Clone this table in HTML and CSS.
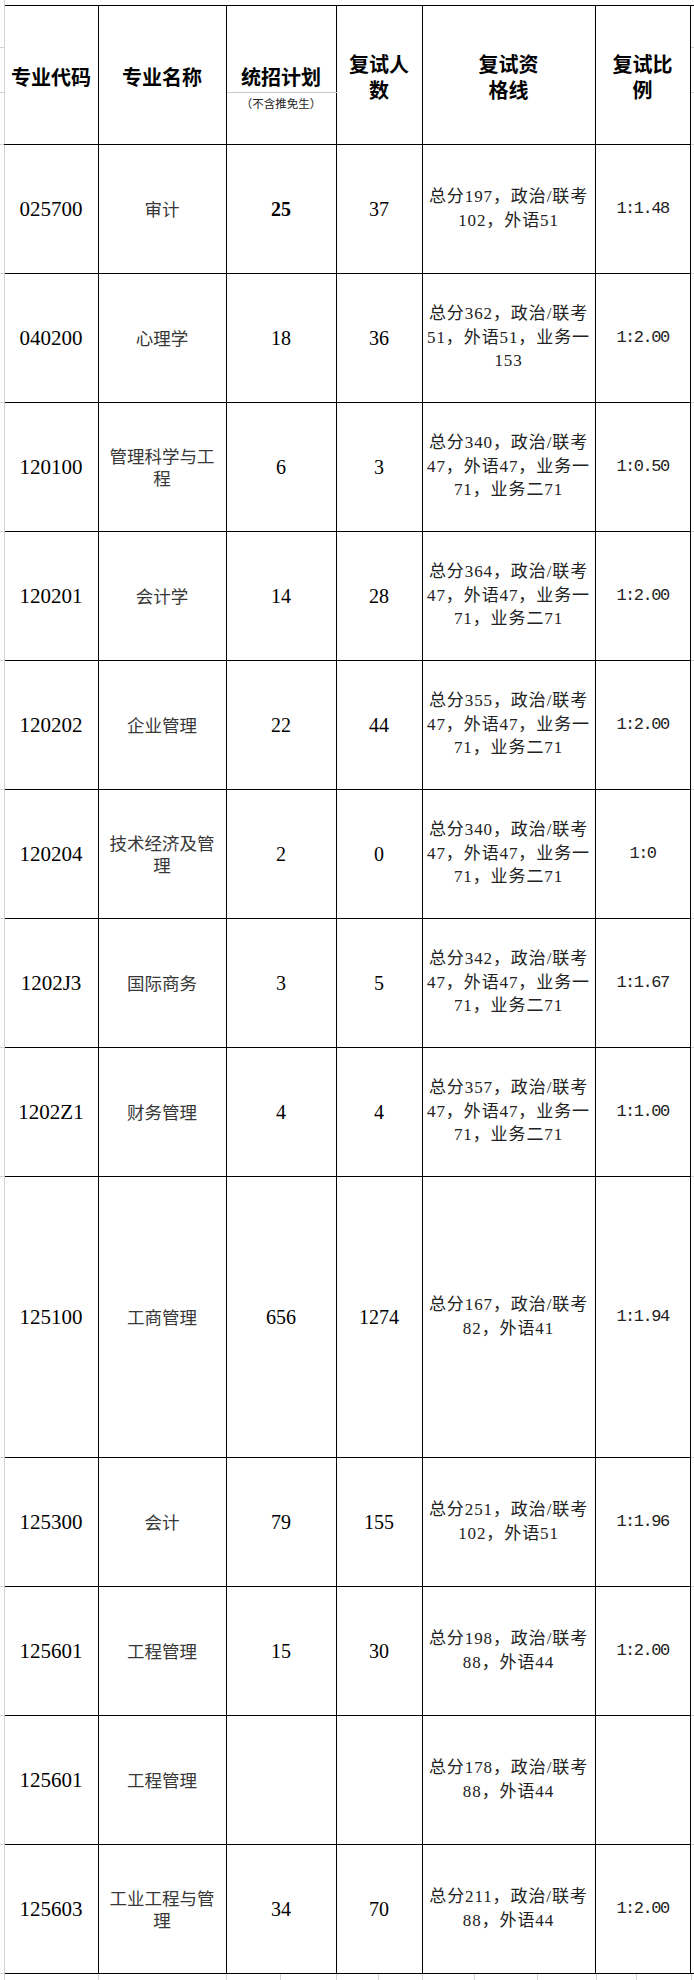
FILE: index.html
```html
<!DOCTYPE html>
<html lang="zh-CN">
<head>
<meta charset="utf-8">
<title>复试分数线</title>
<link rel="stylesheet" href="styles.css">
</head>
<body>
<table class="sheet">
  <colgroup>
    <col class="w-gl"><col class="w-code"><col class="w-name"><col class="w-plan"><col class="w-cnt"><col class="w-line"><col class="w-ratio"><col class="w-gr">
  </colgroup>
  <tr class="r-top"><td class="gl gl-top"></td><td class="blank" colspan="6"></td><td class="gr gr-top"></td></tr>
  <tr class="r-h1">
    <td class="gl"></td>
    <th class="first" rowspan="3">专业代码</th>
    <th rowspan="3">专业名称</th>
    <th class="plan" rowspan="2">统招计划</th>
    <th rowspan="3">复试人<br>数</th>
    <th rowspan="3">复试资<br>格线</th>
    <th rowspan="3">复试比<br>例</th>
    <td class="gr"></td>
  </tr>
  <tr class="r-h2"><td class="gl"></td><td class="gr"></td></tr>
  <tr class="r-h3"><td class="gl"></td><td class="plan-note"><span class="paren">（</span>不含推免生<span class="paren">）</span></td><td class="gr"></td></tr>

  <tr class="row"><td class="gl"></td><td class="cell code first">025700</td><td class="cell name">审计</td><td class="cell num strong">25</td><td class="cell num">37</td><td class="cell qual">总分197，政治/联考<br>102，外语51</td><td class="cell ratio">1:1.48</td><td class="gr"></td></tr>
  <tr class="row"><td class="gl"></td><td class="cell code first">040200</td><td class="cell name">心理学</td><td class="cell num">18</td><td class="cell num">36</td><td class="cell qual">总分362，政治/联考<br>51，外语51，业务一<br>153</td><td class="cell ratio">1:2.00</td><td class="gr"></td></tr>
  <tr class="row"><td class="gl"></td><td class="cell code first">120100</td><td class="cell name">管理科学与工<br>程</td><td class="cell num">6</td><td class="cell num">3</td><td class="cell qual">总分340，政治/联考<br>47，外语47，业务一<br>71，业务二71</td><td class="cell ratio">1:0.50</td><td class="gr"></td></tr>
  <tr class="row"><td class="gl"></td><td class="cell code first">120201</td><td class="cell name">会计学</td><td class="cell num">14</td><td class="cell num">28</td><td class="cell qual">总分364，政治/联考<br>47，外语47，业务一<br>71，业务二71</td><td class="cell ratio">1:2.00</td><td class="gr"></td></tr>
  <tr class="row"><td class="gl"></td><td class="cell code first">120202</td><td class="cell name">企业管理</td><td class="cell num">22</td><td class="cell num">44</td><td class="cell qual">总分355，政治/联考<br>47，外语47，业务一<br>71，业务二71</td><td class="cell ratio">1:2.00</td><td class="gr"></td></tr>
  <tr class="row"><td class="gl"></td><td class="cell code first">120204</td><td class="cell name">技术经济及管<br>理</td><td class="cell num">2</td><td class="cell num">0</td><td class="cell qual">总分340，政治/联考<br>47，外语47，业务一<br>71，业务二71</td><td class="cell ratio">1:0</td><td class="gr"></td></tr>
  <tr class="row"><td class="gl"></td><td class="cell code first">1202J3</td><td class="cell name">国际商务</td><td class="cell num">3</td><td class="cell num">5</td><td class="cell qual">总分342，政治/联考<br>47，外语47，业务一<br>71，业务二71</td><td class="cell ratio">1:1.67</td><td class="gr"></td></tr>
  <tr class="row"><td class="gl"></td><td class="cell code first">1202Z1</td><td class="cell name">财务管理</td><td class="cell num">4</td><td class="cell num">4</td><td class="cell qual">总分357，政治/联考<br>47，外语47，业务一<br>71，业务二71</td><td class="cell ratio">1:1.00</td><td class="gr"></td></tr>
  <tr class="row-tall"><td class="gl"></td><td class="cell code first">125100</td><td class="cell name">工商管理</td><td class="cell num">656</td><td class="cell num">1274</td><td class="cell qual">总分167，政治/联考<br>82，外语41</td><td class="cell ratio">1:1.94</td><td class="gr"></td></tr>
  <tr class="row"><td class="gl"></td><td class="cell code first">125300</td><td class="cell name">会计</td><td class="cell num">79</td><td class="cell num">155</td><td class="cell qual">总分251，政治/联考<br>102，外语51</td><td class="cell ratio">1:1.96</td><td class="gr"></td></tr>
  <tr class="row"><td class="gl"></td><td class="cell code first">125601</td><td class="cell name">工程管理</td><td class="cell num">15</td><td class="cell num">30</td><td class="cell qual">总分198，政治/联考<br>88，外语44</td><td class="cell ratio">1:2.00</td><td class="gr"></td></tr>
  <tr class="row"><td class="gl"></td><td class="cell code first">125601</td><td class="cell name">工程管理</td><td class="cell num"></td><td class="cell num"></td><td class="cell qual">总分178，政治/联考<br>88，外语44</td><td class="cell ratio"></td><td class="gr"></td></tr>
  <tr class="row last"><td class="gl"></td><td class="cell code first">125603</td><td class="cell name">工业工程与管<br>理</td><td class="cell num">34</td><td class="cell num">70</td><td class="cell qual">总分211，政治/联考<br>88，外语44</td><td class="cell ratio">1:2.00</td><td class="gr"></td></tr>
</table>
<div class="ruler"><span></span><span></span><span></span><span></span><span></span><span></span><span></span><span></span><span></span><span></span><span></span><span></span></div>
</body>
</html>
```

FILE: styles.css
```css
html, body {
  margin: 0;
  padding: 0;
  background: #fff;
}
body {
  width: 694px;
  height: 1980px;
  overflow: hidden;
  font-family: "Liberation Serif", "Noto Sans CJK SC", serif;
  color: #000;
}

.sheet {
  border-collapse: collapse;
  table-layout: fixed;
  width: 694px;
}
.w-gl { width: 4px; }
.w-code { width: 94px; }
.w-name { width: 128px; }
.w-plan { width: 110px; }
.w-cnt { width: 86px; }
.w-line { width: 173px; }
.w-ratio { width: 95px; }
.w-gr { width: 4px; }

.sheet td, .sheet th {
  padding: 0;
}

.r-top { height: 5px; }
.r-h1 { height: 42px; }
.r-h2 { height: 45px; }
.r-h3 { height: 52px; }
.row { height: 129px; }
.row-tall { height: 281px; }

/* spreadsheet gutters */
.gl {
  border-right: 1px solid #d2d2d2;
  border-bottom: 1px solid #d2d2d2;
}
.gl-top { border-bottom: none; }
.gr {
  border-bottom: 1px solid #d2d2d2;
}
.gr-top { border-bottom: 1px solid #000; }
.blank { border-bottom: 1px solid #000; }
.last .gr { border-bottom: 1px solid #000; }

/* header */
.sheet th {
  border: 1px solid #000;
  text-align: center;
  vertical-align: middle;
  padding-top: 5px;
  font: 700 20px/26px "Noto Sans CJK SC", sans-serif;
  color: #000;
}
.sheet th.first, .cell.first {
  border-left: 1px solid #d2d2d2;
}
.sheet th.plan {
  vertical-align: bottom;
  padding-top: 0;
  padding-bottom: 2px;
  border-bottom: 1px solid #c8c8c8;
}
.plan-note {
  border: 1px solid #000;
  border-top: 1px solid #c8c8c8;
  text-align: center;
  vertical-align: top;
  padding-top: 3px !important;
  font: 400 11.5px/14px "Noto Sans CJK SC", sans-serif;
  color: #222;
  white-space: nowrap;
}
.paren {
  display: inline-block;
  width: 11.5px;
  text-align: center;
}

/* body cells */
.cell {
  border: 1px solid #000;
  text-align: center;
  vertical-align: middle;
}
.code {
  font: 400 21px/24px "Liberation Serif", serif;
  color: #000;
}
.name {
  font: 400 17.5px/22px "Noto Sans CJK SC", sans-serif;
  color: #383838;
}
.num {
  font: 400 20px/24px "Liberation Serif", serif;
  color: #000;
}
.num.strong { font-weight: 700; }
.qual {
  font: 400 17px/23.5px "Liberation Serif", "Noto Sans CJK SC", serif;
  letter-spacing: 0.9px;
  color: #222;
  white-space: nowrap;
}
.ratio {
  font: 400 17px/22px "Liberation Mono", monospace;
  letter-spacing: -1.5px;
  color: #222;
}

/* grid ticks below the table */
.ruler {
  display: flex;
  height: 6px;
}
.ruler span {
  flex: none;
  box-sizing: border-box;
  border-right: 1px solid #d2d2d2;
}
.ruler span:nth-child(1) { width: 5px; }
.ruler span:nth-child(2) { width: 94px; }
.ruler span:nth-child(3) { width: 128px; }
.ruler span:nth-child(4) { width: 54px; }
.ruler span:nth-child(5) { width: 56px; }
.ruler span:nth-child(6) { width: 42px; }
.ruler span:nth-child(7) { width: 44px; }
.ruler span:nth-child(8) { width: 52px; }
.ruler span:nth-child(9) { width: 63px; }
.ruler span:nth-child(10) { width: 59px; }
.ruler span:nth-child(11) { width: 40px; }
.ruler span:nth-child(12) { width: 55px; }
```
